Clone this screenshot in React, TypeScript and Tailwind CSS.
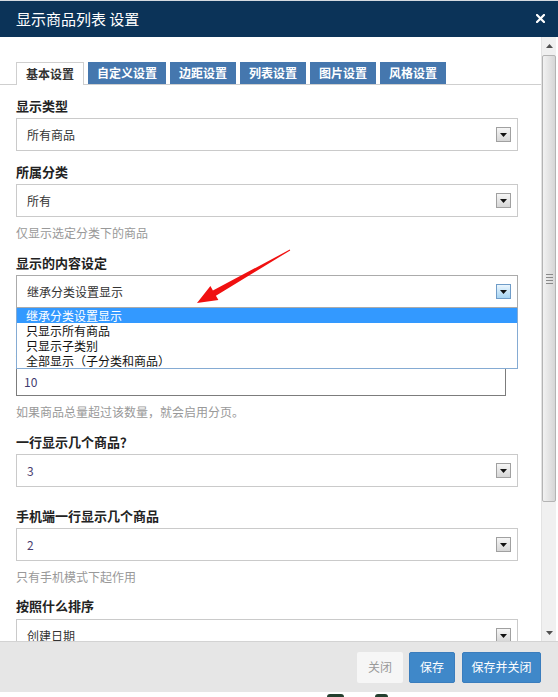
import React from "react";

function ArrowBtn({ active }: { active?: boolean }) {
  return (
    <span
      className={
        active
          ? "flex h-[15px] w-[15px] items-center justify-center border border-[#6f9cc8] bg-linear-to-b from-[#eaf5fd] to-[#a6d4f2]"
          : "flex h-[15px] w-[15px] items-center justify-center border border-[#a0a0a0] bg-linear-to-b from-[#f6f6f6] to-[#d6d6d6]"
      }
    >
      <svg width="7" height="4" viewBox="0 0 7 4">
        <path d="M0 0h7L3.5 4z" fill="#111" />
      </svg>
    </span>
  );
}

function Select({
  value,
  num,
  active,
  className = "",
}: {
  value: string;
  num?: boolean;
  active?: boolean;
  className?: string;
}) {
  return (
    <div
      className={
        "flex h-[33px] w-[502px] items-center justify-between border bg-white pl-[10px] pr-[6px] text-[12px] leading-4 " +
        (active ? "border-[#ababab] " : "border-[#cacaca] ") +
        (num ? "text-[#4b3f70] " : "text-[#333] ") +
        className
      }
    >
      <span>{value}</span>
      <ArrowBtn active={active} />
    </div>
  );
}

function Label({ children, className = "" }: { children: React.ReactNode; className?: string }) {
  return <div className={"h-4 text-[13px] font-bold leading-4 text-[#222] " + className}>{children}</div>;
}

function Help({ children, className = "" }: { children: React.ReactNode; className?: string }) {
  return <div className={"h-4 text-[12px] leading-4 text-[#999] " + className}>{children}</div>;
}

export default function App() {
  const tabs = ["自定义设置", "边距设置", "列表设置", "图片设置", "风格设置"];
  return (
    <div className="relative h-[697px] w-[558px] overflow-hidden bg-white font-['Noto_Sans_CJK_SC',sans-serif]">
      {/* header */}
      <div className="flex h-[37px] items-center justify-between border-t border-[#d5dae0] bg-[#0b3358] pl-4 pr-[13px]">
        <span className="text-[15px] leading-5 text-white">显示商品列表 设置</span>
        <svg width="9" height="9" viewBox="0 0 9 9" className="-mt-[2px]">
          <path d="M1 1L8 8M8 1L1 8" stroke="#fff" strokeWidth="2.2" strokeLinecap="square" />
        </svg>
      </div>

      {/* body */}
      <div className="flex h-[604px]">
        <div className="w-[541px] overflow-hidden pt-[25px]">
          {/* tabs */}
          <div className="flex h-[23px] items-start gap-[4px] border-b border-[#cfcfcf] pl-4">
            <div className="-mb-px flex h-[23px] items-center border border-b-0 border-[#cfcfcf] bg-white px-[9px] text-[12px] font-bold text-[#333]">
              基本设置
            </div>
            {tabs.map((t) => (
              <div
                key={t}
                className="flex h-[22px] items-center border border-[#4577ae] bg-[#4577ae] px-[8px] text-[12px] font-bold text-white"
              >
                {t}
              </div>
            ))}
          </div>

          <div className="pl-4">
            <Label className="mt-[13px]">显示类型</Label>
            <Select value="所有商品" className="mt-[4px]" />

            <Label className="mt-[13px]">所属分类</Label>
            <Select value="所有" className="mt-[4px]" />
            <Help className="mt-[8px]">仅显示选定分类下的商品</Help>

            <Label className="mt-[14px]">显示的内容设定</Label>
            <div className="relative mt-[4px]">
              <Select value="继承分类设置显示" active />
              <div className="absolute left-0 top-full z-10 w-[502px] border border-t-0 border-[#85abd3] bg-white text-[12px] leading-[15px] text-[#111]">
                <div className="h-[15px] bg-[#3399ff] pl-[9px] text-white">继承分类设置显示</div>
                <div className="h-[15px] pl-[9px]">只显示所有商品</div>
                <div className="h-[15px] pl-[9px]">只显示子类别</div>
                <div className="h-[15px] pl-[9px]">全部显示（子分类和商品）</div>
              </div>
            </div>

            <Label className="mt-[39px]">每页显示几个商品</Label>
            <div className="mt-[4px] flex h-[29px] w-[490px] items-center border border-[#7c7c7c] bg-white pl-[7px] text-[12px] text-[#3f3a6e]">
              10
            </div>
            <Help className="mt-[8px]">如果商品总量超过该数量，就会启用分页。</Help>

            <Label className="mt-[14px]">一行显示几个商品？</Label>
            <Select value="3" num className="mt-[4px]" />

            <Label className="mt-[21px]">手机端一行显示几个商品</Label>
            <Select value="2" num className="mt-[4px]" />
            <Help className="mt-[8px]">只有手机模式下起作用</Help>

            <Label className="mt-[13px]">按照什么排序</Label>
            <Select value="创建日期" className="mt-[5px]" />
          </div>
        </div>

        {/* scrollbar */}
        <div className="flex w-[15px] flex-col border-l border-[#e3e3e3] bg-[#f0f0f0]">
          <div className="flex h-[17px] items-center justify-center">
            <svg width="7" height="4" viewBox="0 0 7 4">
              <path d="M0 4h7L3.5 0z" fill="#505050" />
            </svg>
          </div>
          <div className="mt-px flex h-[447px] flex-col items-center justify-center gap-[2px] rounded-[2px] border border-[#b4b4b4] bg-linear-to-r from-[#f2f2f2] via-[#e4e4e4] to-[#d6d6d6]">
            <div className="h-px w-[7px] bg-[#8a8a8a]" />
            <div className="h-px w-[7px] bg-[#8a8a8a]" />
            <div className="h-px w-[7px] bg-[#8a8a8a]" />
            <div className="h-px w-[7px] bg-[#8a8a8a]" />
          </div>
          <div className="flex-1" />
          <div className="flex h-[16px] items-center justify-center">
            <svg width="7" height="4" viewBox="0 0 7 4">
              <path d="M0 0h7L3.5 4z" fill="#505050" />
            </svg>
          </div>
        </div>
        <div className="flex-1 bg-white" />
      </div>

      {/* footer */}
      <div className="flex h-[51px] items-center justify-end gap-[6px] border-t border-[#d3d3d3] bg-[#e6e6e6] pr-[17px]">
        <button className="flex h-[31px] w-[46px] items-center justify-center rounded-[2px] bg-[#f6f6f6] text-[12px] text-[#9a9a9a]">
          关闭
        </button>
        <button className="flex h-[31px] w-[46px] items-center justify-center rounded-[2px] border border-[#3a7dbd] bg-[#3f88c9] text-[12px] text-white">
          保存
        </button>
        <button className="ml-px flex h-[31px] w-[79px] items-center justify-center rounded-[2px] border border-[#3a7dbd] bg-[#3f88c9] text-[12px] text-white">
          保存并关闭
        </button>
      </div>

      {/* page background peeking below */}
      <div className="flex h-[5px] items-end bg-white">
        <div className="ml-[327px] h-[3px] w-[17px] rounded-t-full bg-[#24402f]" />
        <div className="ml-[31px] h-[3px] w-[13px] rounded-t-full bg-[#24402f]" />
      </div>

      {/* red annotation arrow */}
      <svg className="pointer-events-none absolute left-0 top-0 z-20" width="558" height="697" viewBox="0 0 558 697">
        <polygon
          points="197,303 210.4,286.1 212.9,290.5 289.8,249.6 290.2,250.4 215.9,295.7 218.4,300.1"
          fill="#f01010"
        />
      </svg>
    </div>
  );
}
